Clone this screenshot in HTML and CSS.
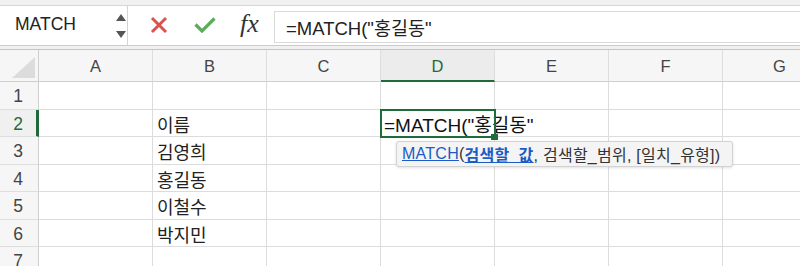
FILE: index.html
```html
<!DOCTYPE html>
<html lang="ko">
<head>
<meta charset="utf-8">
<link rel="stylesheet" href="styles.css">
</head>
<body>
<div class="app">
  <div class="toolbar">
    <div class="fbar">
      <div class="namebox">
        <span class="name">MATCH</span>
        <svg class="spin" width="10" height="26" viewBox="0 0 10 26">
          <polygon points="5,1 10,8 0,8" fill="#555"/>
          <polygon points="0,18 10,18 5,25" fill="#555"/>
        </svg>
      </div>
      <div class="actions">
        <svg class="ico-x" width="18" height="18" viewBox="0 0 18 18">
          <path d="M2 2 L16 16 M16 2 L2 16" stroke="#d9534f" stroke-width="3" fill="none"/>
        </svg>
        <svg class="ico-ok" width="22" height="16" viewBox="0 0 22 16">
          <path d="M1.5 7.5 L8 14 L20.5 1.5" stroke="#5cad5a" stroke-width="3.2" fill="none"/>
        </svg>
        <span class="fx">fx</span>
      </div>
      <div class="finput">=MATCH("홍길동"</div>
    </div>
  </div>
  <div class="sheet">
    <div class="hd corner">
      <svg width="39" height="31" viewBox="0 0 39 31"><polygon points="12,28 35,7 35,28" fill="#dcdcdc"/></svg>
    </div>
    <div class="hd col">A</div>
    <div class="hd col">B</div>
    <div class="hd col">C</div>
    <div class="hd col sel">D</div>
    <div class="hd col">E</div>
    <div class="hd col">F</div>
    <div class="hd col">G</div>

    <div class="rh">1</div>
    <div class="c"></div><div class="c"></div><div class="c"></div><div class="c"></div><div class="c"></div><div class="c"></div><div class="c"></div>

    <div class="rh sel">2</div>
    <div class="c"></div><div class="c">이름</div><div class="c"></div>
    <div class="c active">
      <span class="edit">=MATCH("홍길동"</span>
      <span class="handle"></span>
      <div class="tip"><span class="fn">MATCH</span>(<span class="arg">검색할_값</span>, 검색할_범위, [일치_유형])</div>
    </div>
    <div class="c"></div><div class="c"></div><div class="c"></div>

    <div class="rh">3</div>
    <div class="c"></div><div class="c">김영희</div><div class="c"></div><div class="c"></div><div class="c"></div><div class="c"></div><div class="c"></div>

    <div class="rh">4</div>
    <div class="c"></div><div class="c">홍길동</div><div class="c"></div><div class="c"></div><div class="c"></div><div class="c"></div><div class="c"></div>

    <div class="rh">5</div>
    <div class="c"></div><div class="c">이철수</div><div class="c"></div><div class="c"></div><div class="c"></div><div class="c"></div><div class="c"></div>

    <div class="rh">6</div>
    <div class="c"></div><div class="c">박지민</div><div class="c"></div><div class="c"></div><div class="c"></div><div class="c"></div><div class="c"></div>

    <div class="rh">7</div>
    <div class="c"></div><div class="c"></div><div class="c"></div><div class="c"></div><div class="c"></div><div class="c"></div><div class="c"></div>
  </div>
</div>
</body>
</html>
```
FILE: styles.css
```css
html, body {
  margin: 0;
  padding: 0;
  background: #ffffff;
}
body {
  font-family: "Liberation Sans", "Noto Sans CJK KR", sans-serif;
  color: #222;
}
.app {
  width: 800px;
  height: 266px;
  overflow: hidden;
}
.toolbar {
  background: #f1f1f1;
  padding: 5px 0 3px;
}
.fbar {
  height: 39px;
  background: #ffffff;
  border-top: 1px solid #d6d6d6;
  border-bottom: 1px solid #cbcbcb;
  display: flex;
  align-items: stretch;
}
.namebox {
  width: 128px;
  box-sizing: border-box;
  border-right: 1px solid #d4d4d4;
  display: flex;
  align-items: center;
  padding: 0 1px 2px 15px;
  justify-content: space-between;
}
.name {
  font-size: 17.5px;
  color: #222;
}
.spin {
  margin-top: 2px;
}
.actions {
  width: 146px;
  display: flex;
  align-items: center;
  padding-bottom: 1px;
}
.ico-x {
  margin-left: 22px;
}
.ico-ok {
  margin-left: 26px;
}
.fx {
  margin-left: 24px;
  font-family: "Liberation Serif", serif;
  font-style: italic;
  font-size: 26px;
  color: #333;
  padding-bottom: 2px;
}
.finput {
  flex: 1;
  margin: 5px 0 2px;
  border: 1px solid #dadada;
  border-right: none;
  display: flex;
  align-items: center;
  padding-left: 11px;
  font-size: 18.5px;
  color: #222;
}
.sheet {
  border-top: 1px solid #c4c4c4;
  display: grid;
  grid-template-columns: 39px repeat(7, 114px);
  grid-template-rows: 32px repeat(7, 27.5px);
}
.hd {
  background: #f6f6f6;
  border-bottom: 1px solid #cfcfcf;
  border-right: 1px solid #dedede;
  box-sizing: border-box;
}
.corner {
  border-right: 1px solid #cfcfcf;
}
.corner svg {
  display: block;
}
.col {
  display: flex;
  align-items: center;
  justify-content: center;
  padding-top: 2px;
  font-size: 16.5px;
  color: #444;
}
.col.sel {
  background: #ececec;
  color: #1f6b3a;
  border-bottom: 2px solid #1f6b3a;
}
.rh {
  background: #f6f6f6;
  border-right: 1px solid #cfcfcf;
  border-bottom: 1px solid #dedede;
  box-sizing: border-box;
  display: flex;
  align-items: center;
  justify-content: center;
  padding: 3px 2px 0 0;
  font-size: 17.5px;
  color: #444;
}
.rh.sel {
  color: #1f6b3a;
  border-right: 3px solid #1f6b3a;
  padding-right: 0;
  background: #f0f0f0;
}
.c {
  border-right: 1px solid #dcdcdc;
  border-bottom: 1px solid #dcdcdc;
  box-sizing: border-box;
  display: flex;
  align-items: center;
  padding: 2px 0 0 4px;
  font-size: 18px;
  color: #222;
  white-space: nowrap;
}
.active {
  position: relative;
  overflow: visible;
  z-index: 2;
  outline: 2px solid #1f6b3a;
  outline-offset: -1px;
  padding-left: 3px;
}
.edit {
  font-size: 19px;
  color: #111;
}
.handle {
  position: absolute;
  right: -4px;
  bottom: -4px;
  width: 7px;
  height: 6px;
  background: #1f6b3a;
}
.tip {
  position: absolute;
  left: 15px;
  top: 31px;
  width: 337px;
  height: 26px;
  box-sizing: border-box;
  background: #f4f4f4;
  border: 1px solid #d2d2d2;
  border-radius: 3px;
  box-shadow: 0 1px 3px rgba(0, 0, 0, 0.12);
  padding: 0 0 0 5px;
  display: flex;
  align-items: center;
  font-size: 16px;
  letter-spacing: 0.25px;
  color: #333;
}
.fn {
  color: #1b5bc7;
  text-decoration: underline;
}
.arg {
  color: #1b5bc7;
  font-weight: bold;
  text-decoration: underline;
}
```
